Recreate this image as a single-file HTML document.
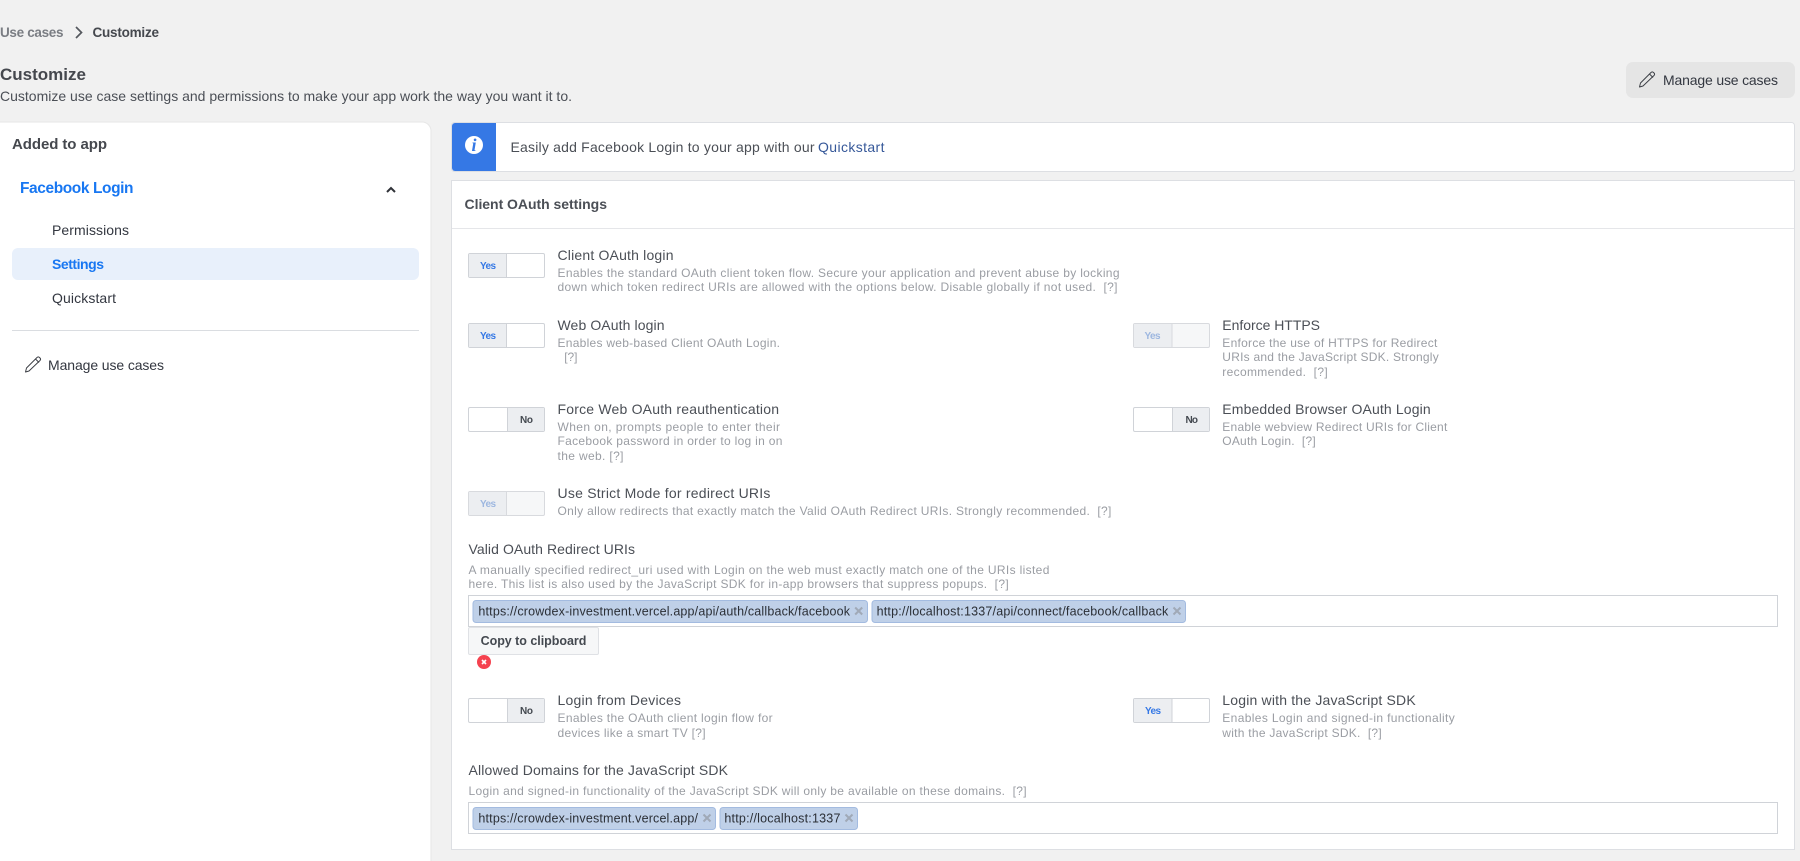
<!DOCTYPE html>
<html lang="en"><head><meta charset="utf-8"><title>Customize</title>
<style>
html,body{margin:0;padding:0;width:1800px;height:861px;overflow:hidden;background:#f1f1f1}
svg{display:block;filter:blur(.3px)}
text{font-family:"Liberation Sans",Arial,sans-serif;white-space:pre}
.t{font-size:14px;fill:#4b4f56}
.d{font-size:12px;fill:#9a9da3}
.n{font-size:14px;fill:#333740}
.tag{font-size:12.5px;fill:#2b2f36}
.x{fill:none;stroke:#a0a9b7;stroke-width:2}
.y{font-size:10px;font-weight:700;fill:#3578e5}
.no{font-size:10px;font-weight:700;fill:#444950}
.sw{fill:#fff;stroke:#d0d3d8}
.on{fill:#eceef1}
.tg{fill:#bfd0e8;stroke:#a3bbe0}
</style></head><body>
<svg xmlns="http://www.w3.org/2000/svg" width="1800" height="861" viewBox="0 0 1800 861">
<rect width="1800" height="861" fill="#f1f1f1"/>

<!-- Header -->
<text x="0" y="37" textLength="63.500" style="font-size:13.500px;font-weight:700;fill:#7a7d83">Use cases</text>
<path d="M76 27l5.500 5.500-5.500 5.500" fill="none" stroke="#55585e" stroke-width="1.700"/>
<text x="92.500" y="37" textLength="66.500" style="font-size:13.500px;font-weight:700;fill:#45484e">Customize</text>
<text x="0" y="80" textLength="86" style="font-size:17px;font-weight:700;fill:#45484e">Customize</text>
<text x="0" y="101" textLength="572" style="font-size:14px;fill:#4b4f56">Customize use case settings and permissions to make your app work the way you want it to.</text>

<rect x="1626" y="62" width="169" height="36" rx="7" fill="#e5e5e5"/>
<path d="M1639.500 87l1-4 10.500-10.500a1.800 1.800 0 0 1 2.500 0l.5.5a1.800 1.800 0 0 1 0 2.500L1643 86z M1649.500 74l3.500 3.500" fill="none" stroke="#3a3d43" stroke-width=".95" stroke-linejoin="round"/>
<text x="1663" y="85" textLength="115" class="n">Manage use cases</text>

<!-- Sidebar -->
<rect x="-10" y="122" width="441" height="760" rx="9" fill="#fff" stroke="#e6e6e6"/>
<text x="12" y="149" textLength="95" style="font-size:15px;font-weight:700;fill:#45484e">Added to app</text>
<text x="20" y="193" textLength="113.500" style="font-size:15.500px;font-weight:700;fill:#1877f2">Facebook Login</text>
<path d="M387 192l4-4 4 4" fill="none" stroke="#2f3238" stroke-width="2"/>
<text x="52" y="235" textLength="77" class="n">Permissions</text>
<rect x="12" y="248" width="407" height="32" rx="6" fill="#e8f0fb"/>
<text x="52" y="269" textLength="52" style="font-size:14px;font-weight:700;fill:#1877f2">Settings</text>
<text x="52" y="303" textLength="64" class="n">Quickstart</text>
<rect x="12" y="330" width="407" height="1" fill="#dadde1"/>
<path d="M25.500 372l1-4 10.500-10.500a1.800 1.800 0 0 1 2.500 0l.5.5a1.800 1.800 0 0 1 0 2.500L29 371z M35.500 359l3.500 3.500" fill="none" stroke="#3a3d43" stroke-width=".95" stroke-linejoin="round"/>
<text x="48" y="370" textLength="116" class="n">Manage use cases</text>

<!-- Notice -->
<rect x="451.500" y="122.500" width="1343" height="49" rx="3" fill="#fff" stroke="#dddfe3"/>
<path d="M496 123h-41a3 3 0 0 0-3 3v42a3 3 0 0 0 3 3h41z" fill="#3578e5"/>
<circle cx="474" cy="145" r="9" fill="#fff"/>
<text x="474" y="151" text-anchor="middle" style="font-family:'Liberation Serif',serif;font-size:18px;font-style:italic;font-weight:700;fill:#3578e5">i</text>
<text x="510.500" y="152" textLength="304" style="font-size:14px;fill:#4b4f56">Easily add Facebook Login to your app with our</text>
<text x="818" y="152" textLength="66.500" style="font-size:14px;fill:#365899">Quickstart</text>

<!-- Card -->
<rect x="451.500" y="180.500" width="1343" height="669" fill="#fff" stroke="#dddfe3"/>
<rect x="452" y="228" width="1342" height="1" fill="#e5e6e9"/>
<text x="464.500" y="209" textLength="142.500" style="font-size:14px;font-weight:700;fill:#4b4f56">Client OAuth settings</text>

<!-- Client OAuth login -->
<rect class="sw" x="468.500" y="253.500" width="76" height="24" rx="1.500"/>
<rect class="on" x="469" y="254" width="37.500" height="23"/><rect x="506" y="254" width="1" height="23" fill="#d0d3d8"/>
<text class="y" x="480" y="269" textLength="16">Yes</text>
<text class="t" x="557.500" y="260" textLength="116">Client OAuth login</text>
<text class="d" x="557.500" y="277" textLength="562">Enables the standard OAuth client token flow. Secure your application and prevent abuse by locking</text>
<text class="d" x="557.500" y="291" textLength="560">down which token redirect URIs are allowed with the options below. Disable globally if not used.&#160; [?]</text>

<!-- Web OAuth login -->
<rect class="sw" x="468.500" y="323.500" width="76" height="24" rx="1.500"/>
<rect class="on" x="469" y="324" width="37.500" height="23"/><rect x="506" y="324" width="1" height="23" fill="#d0d3d8"/>
<text class="y" x="480" y="339" textLength="16">Yes</text>
<text class="t" x="557.500" y="330" textLength="107">Web OAuth login</text>
<text class="d" x="557.500" y="347" textLength="222.500">Enables web-based Client OAuth Login.</text>
<text class="d" x="564.200" y="361" textLength="13.300">[?]</text>

<!-- Enforce HTTPS -->
<rect x="1133.500" y="323.500" width="76" height="24" rx="1.500" fill="#f6f7f8" stroke="#d8dade"/>
<rect x="1134" y="324" width="38" height="23" fill="#eceef1"/><rect x="1171.500" y="324" width="1" height="23" fill="#d8dade"/>
<text x="1144.500" y="339" textLength="16" style="font-size:10px;font-weight:700;fill:#9db7e0">Yes</text>
<text class="t" x="1222.300" y="330" textLength="97.700">Enforce HTTPS</text>
<text class="d" x="1222.300" y="347" textLength="215">Enforce the use of HTTPS for Redirect</text>
<text class="d" x="1222.300" y="361" textLength="216.400">URIs and the JavaScript SDK. Strongly</text>
<text class="d" x="1222.300" y="376" textLength="105.400">recommended.&#160; [?]</text>

<!-- Force reauth -->
<rect class="sw" x="468.500" y="407.500" width="76" height="24" rx="1.500"/>
<rect class="on" x="507.500" y="408" width="36.500" height="23"/><rect x="507" y="408" width="1" height="23" fill="#d0d3d8"/>
<text class="no" x="520" y="423" textLength="13">No</text>
<text class="t" x="557.500" y="414" textLength="221.500">Force Web OAuth reauthentication</text>
<text class="d" x="557.500" y="431" textLength="222.500">When on, prompts people to enter their</text>
<text class="d" x="557.500" y="445" textLength="224.900">Facebook password in order to log in on</text>
<text class="d" x="557.500" y="460" textLength="66">the web. [?]</text>

<!-- Embedded -->
<rect class="sw" x="1133.500" y="407.500" width="76" height="24" rx="1.500"/>
<rect class="on" x="1172.500" y="408" width="36.500" height="23"/><rect x="1172" y="408" width="1" height="23" fill="#d0d3d8"/>
<text class="no" x="1185.500" y="423" textLength="12.500">No</text>
<text class="t" x="1222.300" y="414" textLength="208.400">Embedded Browser OAuth Login</text>
<text class="d" x="1222.300" y="431" textLength="225">Enable webview Redirect URIs for Client</text>
<text class="d" x="1222.300" y="445" textLength="93.400">OAuth Login.&#160; [?]</text>

<!-- Strict -->
<rect x="468.500" y="491.500" width="76" height="24" rx="1.500" fill="#f6f7f8" stroke="#d8dade"/>
<rect x="469" y="492" width="37.500" height="23" fill="#eceef1"/><rect x="506" y="492" width="1" height="23" fill="#d8dade"/>
<text x="480" y="507" textLength="16" style="font-size:10px;font-weight:700;fill:#9db7e0">Yes</text>
<text class="t" x="557.500" y="498" textLength="212.900">Use Strict Mode for redirect URIs</text>
<text class="d" x="557.500" y="515" textLength="553.900">Only allow redirects that exactly match the Valid OAuth Redirect URIs. Strongly recommended.&#160; [?]</text>

<!-- Valid URIs -->
<text class="t" x="468.500" y="554" textLength="166.500">Valid OAuth Redirect URIs</text>
<text class="d" x="468.500" y="574" textLength="580.900">A manually specified redirect_uri used with Login on the web must exactly match one of the URIs listed</text>
<text class="d" x="468.500" y="588" textLength="540.200">here. This list is also used by the JavaScript SDK for in-app browsers that suppress popups.&#160; [?]</text>
<rect x="468.500" y="595.500" width="1309" height="31" fill="#fff" stroke="#d0d3d8"/>
<rect class="tg" x="473" y="600.500" width="394.500" height="22" rx="3"/>
<text class="tag" x="478.400" y="615.500" textLength="371.600">https://crowdex-investment.vercel.app/api/auth/callback/facebook</text>
<path class="x" d="M855.200 607.500l7 7m0-7l-7 7"/>
<rect class="tg" x="872" y="600.500" width="313.500" height="22" rx="3"/>
<text class="tag" x="876.600" y="615.500" textLength="291.700">http://localhost:1337/api/connect/facebook/callback</text>
<path class="x" d="M1173.500 607.500l7 7m0-7l-7 7"/>
<rect x="468.500" y="627.500" width="130" height="27" rx="1.500" fill="#f6f7f8" stroke="#dfe1e5"/>
<text x="480.600" y="645" textLength="105.800" style="font-size:12.500px;font-weight:700;fill:#444950">Copy to clipboard</text>
<circle cx="484" cy="662" r="7" fill="#f5424f"/>
<path d="M482 660l4 4m0-4l-4 4" stroke="#fff" stroke-width="1.600" fill="none"/>

<!-- Devices -->
<rect class="sw" x="468.500" y="698.500" width="76" height="24" rx="1.500"/>
<rect class="on" x="507.500" y="699" width="36.500" height="23"/><rect x="507" y="699" width="1" height="23" fill="#d0d3d8"/>
<text class="no" x="520" y="714" textLength="13">No</text>
<text class="t" x="557.500" y="705" textLength="123.500">Login from Devices</text>
<text class="d" x="557.500" y="722" textLength="215.100">Enables the OAuth client login flow for</text>
<text class="d" x="557.500" y="737" textLength="148.100">devices like a smart TV [?]</text>

<!-- JS SDK -->
<rect class="sw" x="1133.500" y="698.500" width="76" height="24" rx="1.500"/>
<rect class="on" x="1134" y="699" width="38" height="23"/><rect x="1171.500" y="699" width="1" height="23" fill="#d0d3d8"/>
<text class="y" x="1145" y="714" textLength="16">Yes</text>
<text class="t" x="1222.300" y="705" textLength="193.400">Login with the JavaScript SDK</text>
<text class="d" x="1222.300" y="722" textLength="232.400">Enables Login and signed-in functionality</text>
<text class="d" x="1222.300" y="737" textLength="159.400">with the JavaScript SDK.&#160; [?]</text>

<!-- Allowed -->
<text class="t" x="468.500" y="775" textLength="259.500">Allowed Domains for the JavaScript SDK</text>
<text class="d" x="468.500" y="795" textLength="558.100">Login and signed-in functionality of the JavaScript SDK will only be available on these domains.&#160; [?]</text>
<rect x="468.500" y="802.500" width="1309" height="31" fill="#fff" stroke="#d0d3d8"/>
<rect class="tg" x="473" y="807.500" width="242.500" height="22" rx="3"/>
<text class="tag" x="478.400" y="822.500" textLength="219.600">https://crowdex-investment.vercel.app/</text>
<path class="x" d="M703.500 814.500l7 7m0-7l-7 7"/>
<rect class="tg" x="720" y="807.500" width="137.500" height="22" rx="3"/>
<text class="tag" x="724.400" y="822.500" textLength="116">http://localhost:1337</text>
<path class="x" d="M845.500 814.500l7 7m0-7l-7 7"/>
</svg>
</body></html>
